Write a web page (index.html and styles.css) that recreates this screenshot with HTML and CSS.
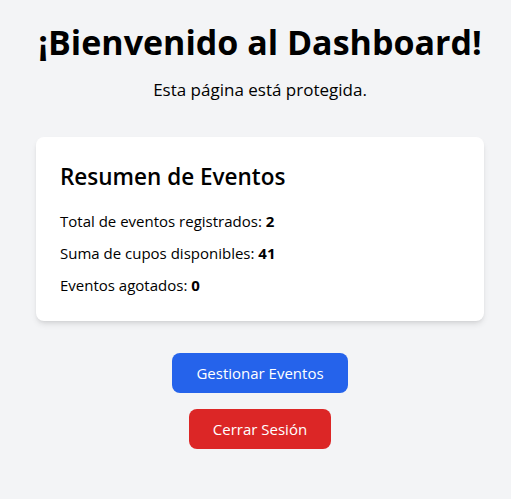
FILE: index.html
```html
<!DOCTYPE html>
<html lang="es">
<head>
<meta charset="utf-8">
<title>Dashboard</title>
<link rel="stylesheet" href="styles.css">
</head>
<body>
<main class="page">
  <h1 class="title">¡Bienvenido al Dashboard!</h1>
  <p class="subtitle">Esta página está protegida.</p>
  <section class="card">
    <h2 class="card-title">Resumen de Eventos</h2>
    <ul class="stats">
      <li>Total de eventos registrados: <strong>2</strong></li>
      <li>Suma de cupos disponibles: <strong>41</strong></li>
      <li>Eventos agotados: <strong>0</strong></li>
    </ul>
  </section>
  <div class="actions">
    <button class="btn btn-blue">Gestionar Eventos</button>
    <button class="btn btn-red">Cerrar Sesión</button>
  </div>
</main>
</body>
</html>
```

FILE: styles.css
```css
* { box-sizing: border-box; }
html, body {
  margin: 0;
  background: #f3f4f6;
  color: #000;
  font-family: "Open Sans", "Noto Sans", sans-serif;
}
.page {
  display: flex;
  flex-direction: column;
  align-items: center;
  padding: 22px 0 0 9px;
}
.title {
  margin: 0 0 14px;
  font-size: 34px;
  line-height: 40px;
  font-weight: 700;
}
.subtitle {
  margin: 0 0 33px;
  font-size: 17px;
  line-height: 28px;
}
.card {
  width: 448px;
  background: #fff;
  border-radius: 8px;
  padding: 24px;
  box-shadow: 0 4px 6px -1px rgba(0,0,0,0.1), 0 2px 4px -2px rgba(0,0,0,0.1);
}
.card-title {
  margin: 0 0 16px;
  font-size: 22.5px;
  line-height: 32px;
  font-weight: 600;
}
.stats {
  list-style: none;
  margin: 0;
  padding: 0;
  display: flex;
  flex-direction: column;
  gap: 8px;
  font-size: 15px;
  line-height: 24px;
}
.stats strong { font-weight: 700; }
.actions {
  margin-top: 32px;
  display: flex;
  flex-direction: column;
  align-items: center;
  gap: 16px;
}
.btn {
  font-family: inherit;
  font-size: 15px;
  line-height: 24px;
  color: #fff;
  border: 0;
  border-radius: 8px;
  padding: 8px 24px;
  cursor: pointer;
}
.btn-blue { background: #2563eb; }
.btn-red { background: #dc2626; }
```
